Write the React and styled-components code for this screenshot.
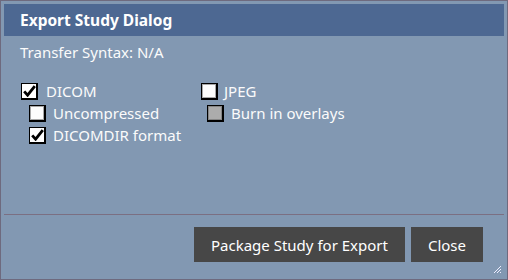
import React from "react";
import styled, { createGlobalStyle } from "styled-components";

const GlobalStyle = createGlobalStyle`
  html, body {
    margin: 0;
    padding: 0;
    background: #8298b2;
  }
  * {
    box-sizing: border-box;
  }
`;

const Dialog = styled.div`
  width: 508px;
  height: 280px;
  border: 1px solid #6e6a7e;
  padding: 3px;
  background: #8298b2;
  display: flex;
  flex-direction: column;
  position: relative;
  font-family: "Noto Sans", "DejaVu Sans", sans-serif;
  color: #fbfbfb;
`;

const TitleBar = styled.div`
  height: 32px;
  background: #4d6892;
  padding-left: 16px;
  display: flex;
  align-items: center;
  font-size: 15.5px;
  font-weight: 700;
  color: #fff;
`;

const Body = styled.div`
  flex: 1;
  padding: 6px 0 0 16px;
`;

const Syntax = styled.div`
  font-size: 15px;
  line-height: 20px;
`;

const Options = styled.div`
  display: flex;
  margin-top: 21px;
  padding-left: 1px;
`;

const Column = styled.div`
  width: ${(p) => p.width || "auto"};
  display: flex;
  flex-direction: column;
  gap: 5px;
`;

const Row = styled.label`
  display: flex;
  align-items: center;
  gap: ${(p) => p.gap || 8}px;
  padding-left: ${(p) => p.indent || 0}px;
  font-size: 15px;
  line-height: 17px;
  height: 17px;
`;

const Box = styled.span`
  width: 17px;
  height: 17px;
  flex: none;
  display: flex;
  align-items: center;
  justify-content: center;
  border: 1px solid #000;
  border-right-width: 2px;
  border-bottom-width: 2px;
  box-shadow: inset 0 0 0 1px ${(p) => p.ring};
  background: ${(p) => p.fill};
`;

const Divider = styled.div`
  height: 1px;
  background: #7b6f82;
`;

const Footer = styled.div`
  display: flex;
  justify-content: flex-end;
  gap: 6px;
  padding: 12px 21px 14px 0;
`;

const Button = styled.button`
  height: 35px;
  padding: 0 ${(p) => p.pad || 16}px;
  border: none;
  background: #474747;
  color: #fff;
  font-family: "Noto Sans", "DejaVu Sans", sans-serif;
  font-size: 15px;
  cursor: pointer;
`;

const Grip = styled.svg`
  position: absolute;
  right: 5px;
  bottom: 5px;
`;

const styles = {
  checked: { ring: "#fff", fill: "#fff" },
  unchecked: { ring: "#a9a9a9", fill: "#fdfdfd" },
  disabled: { ring: "#858585", fill: "#acacac" },
};

function Check({ state, label, indent, gap }) {
  const s = styles[state];
  return (
    <Row indent={indent} gap={gap}>
      <Box ring={s.ring} fill={s.fill}>
        {state === "checked" && (
          <svg width="13" height="12" viewBox="0 0 13 12">
            <path d="M1.2 6.4 L4.6 10.2 L11.8 1.2" fill="none" stroke="#000" strokeWidth="2.8" />
          </svg>
        )}
      </Box>
      {label}
    </Row>
  );
}

export default function App() {
  return (
    <>
      <GlobalStyle />
      <Dialog>
        <TitleBar>Export Study Dialog</TitleBar>
        <Body>
          <Syntax>Transfer Syntax: N/A</Syntax>
          <Options>
            <Column width="180px">
              <Check state="checked" label="DICOM" />
              <Check state="unchecked" label="Uncompressed" indent={8} gap={7} />
              <Check state="checked" label="DICOMDIR format" indent={8} gap={7} />
            </Column>
            <Column>
              <Check state="unchecked" label="JPEG" gap={6} />
              <Check state="disabled" label="Burn in overlays" indent={6} gap={7} />
            </Column>
          </Options>
        </Body>
        <Divider />
        <Footer>
          <Button pad={17}>Package Study for Export</Button>
          <Button pad={17}>Close</Button>
        </Footer>
        <Grip width="9" height="9" viewBox="0 0 9 9">
          <path d="M8 1 L1 8 M8 4 L4 8 M8 7 L7 8" stroke="#eef" strokeWidth="1" />
        </Grip>
      </Dialog>
    </>
  );
}
